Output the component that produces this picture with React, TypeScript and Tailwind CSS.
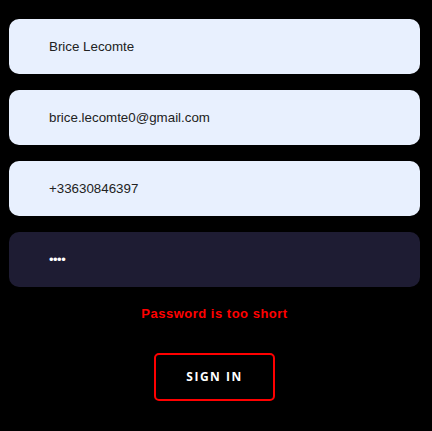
import React from "react";

function Field({ value, dark }: { value: string; dark?: boolean }) {
  return (
    <div
      className={
        dark
          ? "h-[55px] w-full rounded-[10px] bg-[#1e1c33] pl-10 flex items-center"
          : "h-[55px] w-full rounded-[10px] bg-[#e8f0fe] pl-10 flex items-center"
      }
    >
      <span
        className={
          dark
            ? "text-[13px] text-white font-['Liberation_Sans',sans-serif] tracking-[-0.5px]"
            : "text-[13.33px] text-[#222222] font-['Liberation_Sans',sans-serif]"
        }
      >
        {value}
      </span>
    </div>
  );
}

export default function App() {
  return (
    <div className="w-[432px] h-[431px] bg-black flex flex-col items-center pl-[9px] pr-[12px] pt-[19px] font-['Liberation_Sans',sans-serif]">
      <div className="flex w-full flex-col gap-4">
        <Field value="Brice Lecomte" />
        <Field value="brice.lecomte0@gmail.com" />
        <Field value="+33630846397" />
        <Field value="••••" dark />
      </div>
      <div className="mt-[17px] text-[13px] font-bold text-[#ff0000] tracking-[0.5px]">
        Password is too short
      </div>
      <button className="mt-[29px] h-[48px] w-[121px] rounded-[5px] border-2 border-[#ff0000] bg-black text-[12px] font-bold tracking-[1.5px] text-white font-['Open_Sans',sans-serif]">
        SIGN IN
      </button>
    </div>
  );
}
